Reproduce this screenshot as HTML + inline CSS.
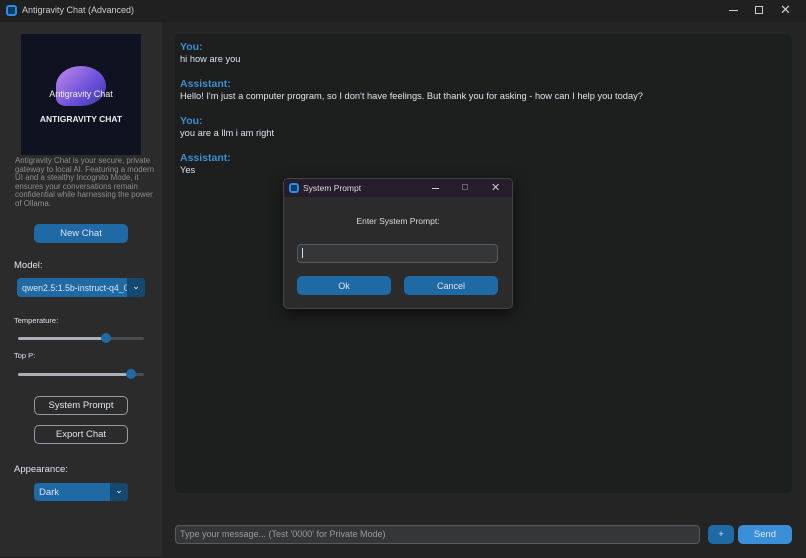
<!DOCTYPE html>
<html><head><style>
*{box-sizing:border-box;margin:0;padding:0}
body{width:806px;height:558px;background:#242424;font-family:"Liberation Sans",sans-serif;color:#dce4ee;position:relative;overflow:hidden;font-size:12px}
.a{position:absolute}
.btn,.ob{position:absolute;display:flex;align-items:center;justify-content:center;color:#dce4ee;font-size:9.5px}
.btn{background:#1f6aa5;border-radius:5px}
.ob{border:1px solid #949a9f;border-radius:5px}
.lbl{color:#3b8ed0;font-weight:bold;font-size:10.5px;line-height:12px}
.msg{font-size:9.3px;color:#dce4ee;line-height:12px}
</style></head><body>
<div class="a" style="left:0;top:0;width:806px;height:22px;background:#202020"></div>
<div class="a" style="left:6px;top:5px;width:11px;height:11px;border:2px solid #2b8ee0;border-radius:3px;background:#0a3a66"></div>
<div class="a" style="left:22px;top:5px;font-size:9px;color:#ccc">Antigravity Chat (Advanced)</div>
<div class="a" style="left:729px;top:10px;width:9px;height:1px;background:#ccc"></div>
<div class="a" style="left:755px;top:6px;width:8px;height:8px;border:1px solid #ccc"></div>
<div class="a" style="left:780px;top:2px;font-size:13px;color:#ccc">✕</div>

<div class="a" style="left:0;top:22px;width:162px;height:534px;background:#2b2b2b"></div>
<div class="a" style="left:21px;top:34px;width:120px;height:121px;background:#0f1220"></div>
<div class="a" style="left:56px;top:66px;width:50px;height:40px;border-radius:50% 50% 50% 20%;background:linear-gradient(135deg,#c48ae8,#6a4fd8 60%,#3a3aa0)"></div>
<div class="a" style="left:21px;top:89px;width:120px;text-align:center;font-size:9px;color:#eee">Antigravity Chat</div>
<div class="a" style="left:21px;top:114px;width:120px;text-align:center;font-size:8.5px;color:#eee;font-weight:bold">ANTIGRAVITY CHAT</div>
<div class="a" style="left:15px;top:157px;width:142px;font-size:7.9px;line-height:8.6px;color:#8d8d8d">Antigravity Chat is your secure, private gateway to local AI. Featuring a modern UI and a stealthy Incognito Mode, it ensures your conversations remain confidential while harnessing the power of Ollama.</div>
<div class="btn" style="left:34px;top:224px;width:94px;height:19px">New Chat</div>
<div class="a" style="left:14px;top:260px;font-size:9.5px">Model:</div>
<div class="btn" style="left:17px;top:278px;width:128px;height:19px;justify-content:flex-start;padding-left:5px;font-size:8.8px;border-radius:4px;white-space:nowrap;overflow:hidden">qwen2.5:1.5b-instruct-q4_0</div>
<div class="a" style="left:127px;top:278px;width:18px;height:19px;background:#144870;border-radius:0 4px 4px 0;color:#fff;text-align:center;line-height:16px;font-size:9px">⌄</div>
<div class="a" style="left:14px;top:316px;font-size:7.5px">Temperature:</div>
<div class="a" style="left:18px;top:337px;width:126px;height:3px;background:#4a4d50;border-radius:2px"></div>
<div class="a" style="left:18px;top:337px;width:88px;height:3px;background:#aab0b5;border-radius:2px"></div>
<div class="a" style="left:101px;top:333px;width:10px;height:10px;background:#1f6aa5;border-radius:50%"></div>
<div class="a" style="left:14px;top:351px;font-size:7.5px">Top P:</div>
<div class="a" style="left:18px;top:373px;width:126px;height:3px;background:#4a4d50;border-radius:2px"></div>
<div class="a" style="left:18px;top:373px;width:113px;height:3px;background:#aab0b5;border-radius:2px"></div>
<div class="a" style="left:126px;top:369px;width:10px;height:10px;background:#1f6aa5;border-radius:50%"></div>
<div class="ob" style="left:34px;top:396px;width:94px;height:19px">System Prompt</div>
<div class="ob" style="left:34px;top:425px;width:94px;height:19px">Export Chat</div>
<div class="a" style="left:14px;top:464px;font-size:9.5px">Appearance:</div>
<div class="btn" style="left:34px;top:483px;width:94px;height:18px;justify-content:flex-start;padding-left:5px;font-size:9.5px;border-radius:4px">Dark</div>
<div class="a" style="left:110px;top:483px;width:18px;height:18px;background:#144870;border-radius:0 4px 4px 0;color:#fff;text-align:center;line-height:15px;font-size:9px">⌄</div>

<div class="a" style="left:175px;top:34px;width:617px;height:459px;background:#1d1e1e;border-radius:5px"></div>
<div class="a" style="left:180px;top:41px">
<div class="lbl">You:</div><div class="msg">hi how are you</div><div style="height:13px"></div>
<div class="lbl">Assistant:</div><div class="msg">Hello! I'm just a computer program, so I don't have feelings. But thank you for asking - how can I help you today?</div><div style="height:13px"></div>
<div class="lbl">You:</div><div class="msg">you are a llm i am right</div><div style="height:13px"></div>
<div class="lbl">Assistant:</div><div class="msg">Yes</div>
</div>

<div class="a" style="left:175px;top:525px;width:525px;height:19px;background:#343638;border:1px solid #565b5e;border-radius:4px;font-size:9px;color:#9a9a9a;line-height:17px;padding-left:4px">Type your message... (Test '0000' for Private Mode)</div>
<div class="btn" style="left:708px;top:525px;width:26px;height:19px;background:#1f6aa5">+</div>
<div class="btn" style="left:738px;top:525px;width:54px;height:19px;background:#3a8fd8">Send</div>

<div class="a" style="left:283px;top:178px;width:230px;height:131px;background:#2b2b2b;border:1px solid #444;border-radius:5px;box-shadow:0 4px 14px rgba(0,0,0,.6)"></div>
<div class="a" style="left:284px;top:179px;width:228px;height:18px;background:#261c2b;border-radius:4px 4px 0 0"></div>
<div class="a" style="left:289px;top:183px;width:10px;height:10px;border:2px solid #2b8ee0;border-radius:3px;background:#0a3a66"></div>
<div class="a" style="left:303px;top:183px;font-size:8.5px;color:#ddd">System Prompt</div>
<div class="a" style="left:432px;top:188px;width:7px;height:1px;background:#ccc"></div>
<div class="a" style="left:462px;top:184px;width:6px;height:6px;border:1px solid #666"></div>
<div class="a" style="left:491px;top:181px;font-size:11px;color:#ccc">✕</div>
<div class="a" style="left:284px;top:216px;width:228px;text-align:center;font-size:8.5px;color:#ddd">Enter System Prompt:</div>
<div class="a" style="left:297px;top:244px;width:201px;height:19px;background:#343638;border:1px solid #565b5e;border-radius:4px"></div>
<div class="a" style="left:302px;top:248px;width:1px;height:10px;background:#ddd"></div>
<div class="btn" style="left:297px;top:276px;width:94px;height:19px;font-size:9px">Ok</div>
<div class="btn" style="left:404px;top:276px;width:94px;height:19px;font-size:9px">Cancel</div>
</body></html>
